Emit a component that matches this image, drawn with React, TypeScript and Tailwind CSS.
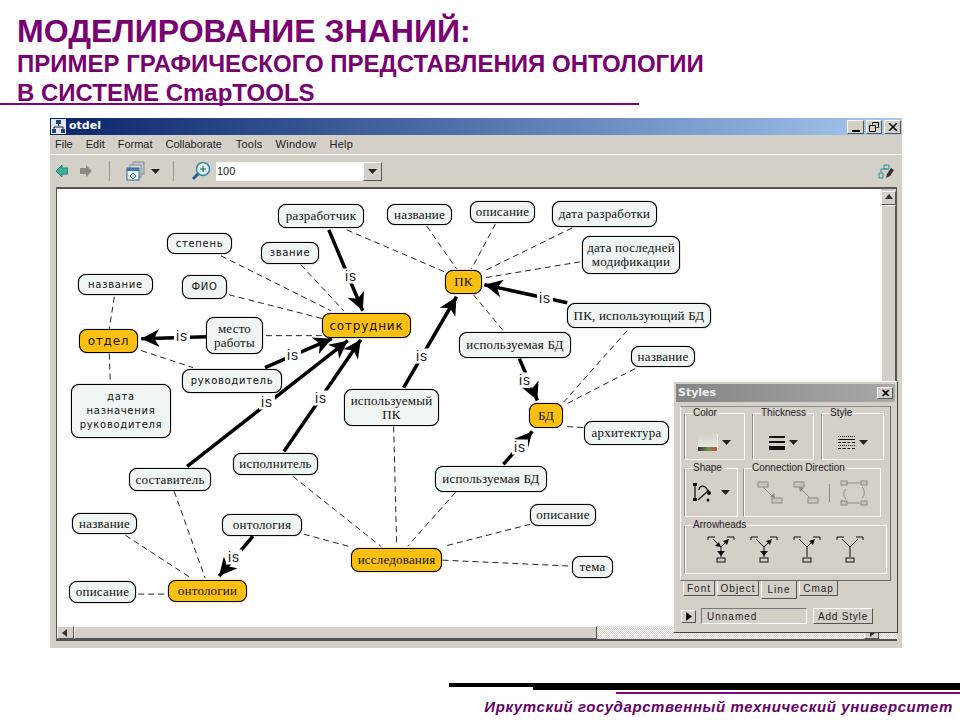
type Font = "serif" | "sans" | "big";

const FONTS: Record<Font, string> = {
  serif: "font-['Liberation_Serif',serif] text-[13px] tracking-[0.2px]",
  sans: "font-['DejaVu_Sans',sans-serif] text-[10px] tracking-[0.7px]",
  big: "font-['DejaVu_Sans',sans-serif] text-[12px] tracking-[0.8px]",
};

// coordinates are page pixels, the canvas svg uses the same numbers through its viewBox
const OX = 57;
const OY = 188;

const nodes: { x: number; y: number; w: number; h: number; text: string; font: Font; yellow?: boolean }[] = [
  { x: 278, y: 203, w: 86, h: 24, text: "разработчик", font: "serif" },
  { x: 167, y: 232, w: 65, h: 21, text: "степень", font: "sans" },
  { x: 261, y: 241, w: 58, h: 22, text: "звание", font: "sans" },
  { x: 78, y: 273, w: 75, h: 21, text: "название", font: "sans" },
  { x: 182, y: 274, w: 45, h: 24, text: "ФИО", font: "sans" },
  { x: 79, y: 328, w: 59, h: 24, text: "отдел", font: "big", yellow: true },
  { x: 206, y: 316, w: 57, h: 37, text: "место\nработы", font: "serif" },
  { x: 322, y: 312, w: 89, h: 25, text: "сотрудник", font: "big", yellow: true },
  { x: 182, y: 368, w: 100, h: 24, text: "руководитель", font: "sans" },
  { x: 71, y: 383, w: 100, h: 54, text: "дата\nназначения\nруководителя", font: "sans" },
  { x: 344, y: 388, w: 95, h: 37, text: "используемый\nПК", font: "serif" },
  { x: 233, y: 452, w: 85, h: 22, text: "исполнитель", font: "serif" },
  { x: 129, y: 467, w: 82, h: 23, text: "составитель", font: "serif" },
  { x: 72, y: 512, w: 65, h: 21, text: "название", font: "serif" },
  { x: 222, y: 513, w: 80, h: 22, text: "онтология", font: "serif" },
  { x: 69, y: 580, w: 67, h: 22, text: "описание", font: "serif" },
  { x: 168, y: 579, w: 79, h: 22, text: "онтологии", font: "serif", yellow: true },
  { x: 351, y: 547, w: 91, h: 24, text: "исследования", font: "serif", yellow: true },
  { x: 435, y: 465, w: 112, h: 26, text: "используемая БД", font: "serif" },
  { x: 530, y: 503, w: 66, h: 22, text: "описание", font: "serif" },
  { x: 572, y: 555, w: 41, h: 22, text: "тема", font: "serif" },
  { x: 387, y: 203, w: 65, h: 21, text: "название", font: "serif" },
  { x: 470, y: 200, w: 65, h: 22, text: "описание", font: "serif" },
  { x: 552, y: 200, w: 105, h: 26, text: "дата разработки", font: "serif" },
  { x: 582, y: 235, w: 98, h: 38, text: "дата последней\nмодификации", font: "serif" },
  { x: 445, y: 269, w: 37, h: 24, text: "ПК", font: "serif", yellow: true },
  { x: 567, y: 302, w: 144, h: 25, text: "ПК, использующий БД", font: "serif" },
  { x: 459, y: 331, w: 112, h: 26, text: "используемая БД", font: "serif" },
  { x: 631, y: 345, w: 64, h: 21, text: "название", font: "serif" },
  { x: 529, y: 402, w: 34, h: 25, text: "БД", font: "serif", yellow: true },
  { x: 584, y: 420, w: 85, h: 24, text: "архитектура", font: "serif" },
];

const dashed = [
  [346, 229, 444, 271], [220, 255, 330, 310], [300, 264, 343, 310], [228, 294, 322, 318],
  [113, 296, 108, 328], [108, 353, 109, 383], [265, 335, 322, 335], [140, 350, 192, 367],
  [426, 225, 456, 268], [495, 223, 471, 268], [572, 227, 482, 271], [580, 261, 484, 277],
  [473, 294, 502, 329], [627, 330, 563, 402], [635, 368, 565, 404], [583, 427, 563, 426],
  [393, 426, 396, 546], [455, 492, 407, 546], [292, 476, 380, 546], [303, 534, 351, 547],
  [530, 524, 444, 546], [442, 560, 572, 566], [173, 491, 204, 578], [124, 535, 190, 578],
  [137, 594, 168, 594],
];

const arrows = [
  [328, 229, 362, 310], [403, 387, 456, 296], [567, 302, 484, 284], [519, 358, 537, 400],
  [503, 464, 532, 431], [206, 336, 140, 338], [264, 367, 331, 338], [186, 466, 347, 340],
  [283, 451, 360, 339], [252, 536, 218, 576],
];

const isLabels = [
  [351, 275], [422, 355], [545, 297], [525, 379], [520, 446], [182, 335], [293, 354], [267, 401], [321, 397], [234, 556],
];

function headPoints(x1: number, y1: number, x2: number, y2: number) {
  const len = Math.hypot(x2 - x1, y2 - y1);
  const ux = (x2 - x1) / len;
  const uy = (y2 - y1) / len;
  const px = -uy;
  const py = ux;
  const pt = (back: number, side: number) => `${x2 - ux * back + px * side},${y2 - uy * back + py * side}`;
  return [pt(0, 0), pt(18, 9), pt(13, 0), pt(18, -9)].join(" ");
}

function Diagram() {
  return (
    <div className="relative flex-1 bg-white overflow-hidden">
      <svg className="absolute inset-0 w-full h-full" viewBox={`${OX} ${OY} 823 438`}>
        {dashed.map((d, i) => (
          <line key={i} x1={d[0]} y1={d[1]} x2={d[2]} y2={d[3]} stroke="#222" strokeWidth="1" strokeDasharray="6 4" />
        ))}
        {arrows.map((a, i) => (
          <g key={i}>
            <line x1={a[0]} y1={a[1]} x2={a[2]} y2={a[3]} stroke="#000" strokeWidth="3.5" />
            <polygon points={headPoints(a[0], a[1], a[2], a[3])} fill="#000" />
          </g>
        ))}
      </svg>
      {isLabels.map((l, i) => (
        <span
          key={i}
          className="absolute -translate-x-1/2 -translate-y-1/2 bg-white px-[2px] font-['Liberation_Sans',sans-serif] text-[14px] leading-[15px] tracking-[1px] text-[#222]"
          style={{ left: l[0] - OX, top: l[1] - OY }}
        >
          is
        </span>
      ))}
      {nodes.map((n) => (
        <div
          key={`${n.x}-${n.y}`}
          className={`absolute flex items-center justify-center whitespace-pre-line text-center leading-[14px] text-[#111] rounded-[8px] border border-black shadow-[0_0_1px_#000] ${
            n.yellow ? "bg-[#fdc010]" : "bg-[#eef5f3]"
          } ${FONTS[n.font]}`}
          style={{ left: n.x - OX, top: n.y - OY, width: n.w, height: n.h }}
        >
          {n.text}
        </div>
      ))}
    </div>
  );
}

function Arrow({ dir }: { dir: "up" | "down" | "left" | "right" }) {
  const pts = { up: "1,6 9,6 5,1", down: "1,2 9,2 5,7", left: "6,1 6,9 1,5", right: "3,1 3,9 8,5" }[dir];
  return (
    <svg className="w-[10px] h-[10px]" viewBox="0 0 10 10">
      <polygon points={pts} fill="#333" />
    </svg>
  );
}

const RAISED = "bg-[#d4d0c8] border border-t-white border-l-white border-r-[#555] border-b-[#555]";

function DropMark() {
  return (
    <svg className="w-[9px] h-[5px]" viewBox="0 0 9 5">
      <polygon points="0,0 9,0 4.5,5" fill="#222" />
    </svg>
  );
}

function Group({ label, className, children }: { label: string; className: string; children: React.ReactNode }) {
  return (
    <div className={`relative flex items-center justify-center gap-1 border border-t-white border-r-white border-b-[#f4f3ef] border-l-[#8f8d87] shadow-[inset_1px_0_0_#fff] ${className}`}>
      <span className="absolute -top-[7px] left-2 bg-[#d4d0c8] pr-px text-[10px] leading-[12px] text-[#222]">{label}</span>
      {children}
    </div>
  );
}

function ArrowheadIcon({ left, right, down }: { left?: boolean; right?: boolean; down?: boolean }) {
  return (
    <svg className="w-[28px] h-[27px]" viewBox="0 0 28 27">
      <path d="M1 4V1h7M20 1h7v3M6 3l8 8 8-8M14 11v10" fill="none" stroke="#111" strokeWidth="1" />
      <rect x="10" y="22" width="8" height="4" fill="none" stroke="#111" />
      {left && <polygon points="14,11 8,10 12,6" fill="#111" />}
      {right && <polygon points="22,3 16,5 20,9" fill="#111" />}
      {down && <polygon points="10,15 18,15 14,20" fill="#111" />}
    </svg>
  );
}

function ConnIcon({ flip }: { flip?: boolean }) {
  return (
    <svg className="w-[26px] h-[26px]" viewBox="0 0 26 26">
      <rect x="1" y="2" width="10" height="5" fill="#c8c5bd" stroke="#8a8a84" />
      <rect x="15" y="18" width="10" height="5" fill="#c8c5bd" stroke="#8a8a84" />
      <path d="M6 7l11 11" stroke="#8a8a84" fill="none" />
      <polygon points={flip ? "6,7 11,8 7,12" : "18,18 13,17 17,13"} fill="#8a8a84" />
    </svg>
  );
}

function StylesPanel() {
  return (
    <div className="absolute left-[623px] top-[263px] w-[225px] h-[252px] flex flex-col p-[2px] bg-[#d4d0c8] border border-t-white border-l-white border-r-[#444] border-b-[#444] font-['Liberation_Sans',sans-serif]">
      <div className="h-[18px] flex items-center justify-between px-[2px] bg-gradient-to-r from-[#858585] to-[#a9a9a6]">
        <span className="font-['DejaVu_Sans',sans-serif] text-[11px] font-bold text-[#eee]">Styles</span>
        <div className={`w-[16px] h-[12px] flex items-center justify-center text-[11px] leading-none font-bold text-black ${RAISED}`}>✕</div>
      </div>
      <div className="mt-[4px] mx-[4px] h-[175px] flex flex-col gap-[8px] px-[3px] pt-[6px] border border-t-[#8f8d87] border-l-white border-r-[#666] border-b-[#666]">
        <div className="flex gap-[7px] h-[47px]">
          <Group label="Color" className="w-[61px] pt-[12px]">
            <div className="w-[20px] h-[17px] flex flex-col justify-end bg-gradient-to-b from-[#d4d0c8] to-[#e8f0e4] border-r border-white">
              <div className="h-[4px] bg-gradient-to-r from-[#333] via-[#6b8f4e] to-[#c0503a]" />
            </div>
            <DropMark />
          </Group>
          <Group label="Thickness" className="w-[62px] pt-[12px]">
            <div className="w-[16px] flex flex-col gap-[3px]">
              <div className="h-[2px] bg-[#111]" />
              <div className="h-[2px] bg-[#111]" />
              <div className="h-[4px] bg-[#111]" />
            </div>
            <DropMark />
          </Group>
          <Group label="Style" className="w-[63px] pt-[12px]">
            <div className="w-[17px] flex flex-col gap-[2px]">
              <div className="border-t border-dotted border-[#111]" />
              <div className="border-t border-[#111]" />
              <div className="border-t border-dashed border-[#111]" />
              <div className="border-t border-dotted border-[#111]" />
              <div className="border-t border-dashed border-[#111]" />
            </div>
            <DropMark />
          </Group>
        </div>
        <div className="flex gap-[5px] h-[49px]">
          <Group label="Shape" className="w-[54px]">
            <svg className="w-[24px] h-[22px]" viewBox="0 0 24 22">
              <path d="M2 3v15M15 10C13 2 6 3 6 8M5 18L16 8" fill="none" stroke="#111" strokeWidth="1.3" />
              <rect x="0" y="1" width="4" height="3" fill="#111" />
              <rect x="0" y="16" width="4" height="3" fill="#111" />
              <circle cx="16" cy="11" r="2" fill="#111" />
              <circle cx="15" cy="18" r="1.5" fill="#111" />
            </svg>
            <DropMark />
          </Group>
          <Group label="Connection Direction" className="w-[138px] gap-[10px]">
            <ConnIcon />
            <ConnIcon flip />
            <div className="w-px h-[18px] bg-[#8a8a84]" />
            <svg className="w-[28px] h-[26px]" viewBox="0 0 28 26">
              <path d="M7 3h13M7 23h13M6 9c-3 3-3 7 0 10M22 7c3 3 3 8 0 11" fill="none" stroke="#8a8a84" />
              <rect x="1" y="1" width="6" height="4" fill="#c8c5bd" stroke="#8a8a84" />
              <rect x="21" y="1" width="6" height="4" fill="#c8c5bd" stroke="#8a8a84" />
              <rect x="1" y="21" width="6" height="4" fill="#c8c5bd" stroke="#8a8a84" />
              <rect x="21" y="21" width="6" height="4" fill="#c8c5bd" stroke="#8a8a84" />
            </svg>
          </Group>
        </div>
        <Group label="Arrowheads" className="h-[49px] gap-[15px]">
          <ArrowheadIcon left right down />
          <ArrowheadIcon right down />
          <ArrowheadIcon right />
          <ArrowheadIcon />
        </Group>
      </div>
      <div className="ml-[7px] flex items-start gap-[2px] text-[10px] tracking-[1px] text-[#222]">
        <div className="w-[32px] h-[15px] flex items-center justify-center border border-t-0 border-l-white border-r-[#555] border-b-[#555]">Font</div>
        <div className="w-[42px] h-[15px] flex items-center justify-center border border-t-0 border-l-white border-r-[#555] border-b-[#555]">Object</div>
        <div className="w-[36px] h-[18px] flex items-center justify-center border border-t-0 border-l-white border-r-[#555] border-b-[#555]">Line</div>
        <div className="w-[39px] h-[15px] flex items-center justify-center border border-t-0 border-l-white border-r-[#555] border-b-[#555]">Cmap</div>
      </div>
      <div className="mt-[9px] ml-[5px] flex items-center h-[16px] text-[10px] tracking-[1px] text-[#222]">
        <div className={`w-[15px] h-[13px] flex items-center justify-center ${RAISED}`}>
          <svg className="w-[8px] h-[9px]" viewBox="0 0 8 9"><polygon points="1,0 7,4.5 1,9" fill="#111" /></svg>
        </div>
        <div className="ml-[5px] w-[106px] h-[16px] flex items-center pl-[5px] border border-t-[#777] border-l-[#777] border-r-white border-b-white">Unnamed</div>
        <div className={`ml-[6px] w-[60px] h-[16px] flex items-center justify-center tracking-[0.8px] ${RAISED}`}>Add Style</div>
      </div>
    </div>
  );
}

function AppWindow() {
  return (
    <div className="relative ml-[50px] w-[852px] h-[530px] flex flex-col bg-[#d4d0c8] font-['Liberation_Sans',sans-serif]">
      <div className="h-[17px] flex items-center justify-between bg-gradient-to-r from-[#0a246a] to-[#a6caf0]">
        <div className="flex items-center gap-[3px] pl-px">
          <svg className="w-[15px] h-[15px]" viewBox="0 0 15 15">
            <rect width="15" height="15" fill="#dfe6f2" />
            <path d="M7.5 4v3M3 11V8h9v3" fill="none" stroke="#123" />
            <rect x="5" y="1" width="5" height="4" fill="#246" />
            <rect x="1" y="10" width="4" height="4" fill="#246" />
            <rect x="10" y="10" width="4" height="4" fill="#246" />
          </svg>
          <span className="font-['DejaVu_Sans',sans-serif] text-[11px] font-bold text-white">otdel</span>
        </div>
        <div className="flex gap-[2px] pr-px">
          <div className={`w-[17px] h-[14px] flex items-end justify-center pb-px ${RAISED}`}><div className="w-[8px] h-[2px] bg-black" /></div>
          <div className={`w-[16px] h-[14px] flex items-center justify-center ${RAISED}`}>
            <svg className="w-[10px] h-[10px]" viewBox="0 0 10 10"><path d="M3.5 2.5V.5h6v5h-2M.5 3.5h6v6h-6z" fill="none" stroke="#000" /></svg>
          </div>
          <div className={`w-[17px] h-[14px] flex items-center justify-center ${RAISED}`}>
            <svg className="w-[10px] h-[8px]" viewBox="0 0 10 8"><path d="M1 0l8 8M9 0L1 8" stroke="#000" strokeWidth="1.5" /></svg>
          </div>
        </div>
      </div>
      <div className="h-[20px] flex items-center gap-[13px] pl-[5px] border-b border-white text-[11px] text-[#222]">
        <span>File</span>
        <span>Edit</span>
        <span>Format</span>
        <span>Collaborate</span>
        <span className="ml-px tracking-[0.2px]">Tools</span>
        <span className="tracking-[0.3px]">Window</span>
        <span className="tracking-[0.3px]">Help</span>
      </div>
      <div className="h-[32px] flex items-center pl-[6px] pr-[8px]">
        <svg className="w-[12px] h-[12px]" viewBox="0 0 12 12"><path d="M0 6l6-6v3h6v6H6v3z" fill="#3fae9a" stroke="#1f7f70" /></svg>
        <svg className="ml-[12px] w-[12px] h-[12px]" viewBox="0 0 12 12"><path d="M12 6L6 0v3H0v6h6v3z" fill="#8b8b86" /></svg>
        <div className="ml-[17px] w-px h-[20px] bg-[#99968f]" />
        <svg className="ml-[16px] w-[20px] h-[20px]" viewBox="0 0 20 20">
          <rect x="7" y="1" width="11" height="12" fill="#c4c8cc" stroke="#8a8a8a" />
          <rect x="4" y="4" width="11" height="12" fill="#d6dbe0" stroke="#8a8a8a" />
          <rect x="1" y="7" width="12" height="12" fill="#eef4fb" stroke="#2a6a9a" />
          <rect x="1" y="7" width="12" height="3" fill="#3a7ab0" />
          <path d="M7 12l3 3-3 3-3-3z" fill="none" stroke="#2a7a60" />
        </svg>
        <div className="ml-[5px]"><DropMark /></div>
        <div className="ml-[13px] w-px h-[20px] bg-[#99968f]" />
        <svg className="ml-[17px] w-[20px] h-[20px]" viewBox="0 0 20 20">
          <path d="M8 12l-6 6" stroke="#2a5a9a" strokeWidth="3" />
          <circle cx="12" cy="8" r="6.5" fill="#d8f0ee" stroke="#3a8a9a" strokeWidth="1.5" />
          <path d="M12 5v6M9 8h6" stroke="#205a50" />
        </svg>
        <div className="ml-[5px] w-[166px] h-[19px] flex items-center justify-between pl-px bg-white text-[11px] text-[#222]">
          <span>100</span>
          <div className={`w-[19px] h-[19px] flex items-center justify-center ${RAISED}`}><DropMark /></div>
        </div>
        <svg className="ml-auto w-[16px] h-[15px]" viewBox="0 0 16 15">
          <path d="M3 8V5h6M1 9h4v5H1zM6 1h5v4H6z" fill="none" stroke="#2a8a9a" />
          <path d="M8 14l1-4 4-6 3 2-4 6z" fill="#333" />
        </svg>
      </div>
      <div className="ml-[6px] mr-[5px] flex-1 flex flex-col border-t-2 border-l border-[#555]">
        <div className="flex-1 flex">
          <Diagram />
          <div className="w-[16px] flex flex-col bg-[#d4d0c8] border-r border-[#555]">
            <div className={`h-[14px] mt-[2px] flex items-center justify-center ${RAISED}`}><Arrow dir="up" /></div>
            <div className={`flex-1 ${RAISED}`} />
          </div>
        </div>
        <div className="h-[15px] flex border-b-2 border-[#555]">
          <div className={`w-[17px] flex items-center justify-center ${RAISED}`}><Arrow dir="left" /></div>
          <div className={`w-[523px] ${RAISED}`} />
          <div className="flex-1 bg-[repeating-conic-gradient(#ffffff_0_25%,#d4d0c8_0_50%)] bg-[length:2px_2px]" />
          <div className={`w-[15px] flex items-center justify-center ${RAISED}`}><Arrow dir="right" /></div>
          <div className="w-[18px] bg-[repeating-conic-gradient(#ffffff_0_25%,#d4d0c8_0_50%)] bg-[length:2px_2px]" />
        </div>
      </div>
      <div className="h-[7px]" />
      <StylesPanel />
    </div>
  );
}

export default function App() {
  return (
    <div className="w-[960px] h-[720px] overflow-hidden bg-white flex flex-col font-['Liberation_Sans',sans-serif]">
      <header className="h-[118px] shrink-0 text-[#780070] font-bold">
        <div className="w-[639px] h-[105px] pl-[17px] pt-[15px] border-b-2 border-[#800080]">
          <h1 className="text-[32px] leading-[33px]">МОДЕЛИРОВАНИЕ ЗНАНИЙ:</h1>
          <p className="whitespace-nowrap text-[24px] leading-[29px] mt-[1px]">ПРИМЕР ГРАФИЧЕСКОГО ПРЕДСТАВЛЕНИЯ ОНТОЛОГИИ</p>
          <p className="whitespace-nowrap text-[24px] leading-[29px]">В СИСТЕМЕ CmapTOOLS</p>
        </div>
      </header>
      <AppWindow />
      <footer className="mt-[35px] flex flex-col items-end">
        <div className="w-[511px] h-[4px] bg-black" />
        <div className="w-[427px] h-[3px] bg-black" />
        <div className="mt-[2px] w-[344px] h-[2px] bg-[#800080]" />
        <p className="mt-[4px] pr-[7px] text-[15px] leading-[18px] font-bold italic tracking-[0.6px] text-[#660066]">
          Иркутский государственный технический университет
        </p>
      </footer>
    </div>
  );
}
